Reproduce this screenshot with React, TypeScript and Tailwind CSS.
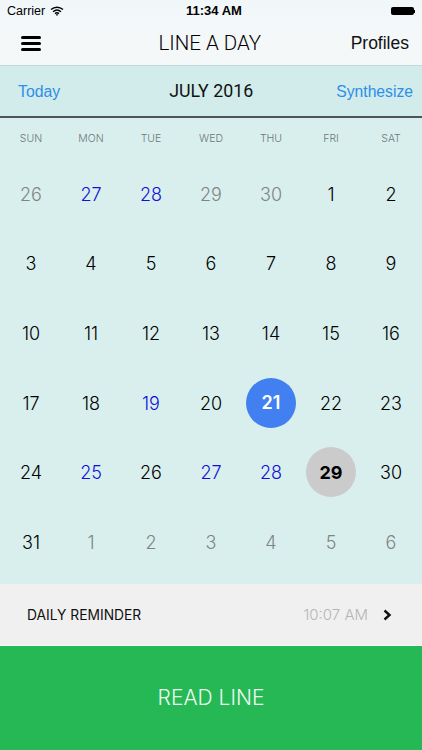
const BLUE = "text-[#1010d8]";
const GREY = "text-[#7f8585]";

const days = [
  ["26", GREY], ["27", BLUE], ["28", BLUE], ["29", GREY], ["30", GREY], ["1", ""], ["2", ""],
  ["3", ""], ["4", ""], ["5", ""], ["6", ""], ["7", ""], ["8", ""], ["9", ""],
  ["10", ""], ["11", ""], ["12", ""], ["13", ""], ["14", ""], ["15", ""], ["16", ""],
  ["17", ""], ["18", ""], ["19", BLUE], ["20", ""], ["21", "today"], ["22", ""], ["23", ""],
  ["24", ""], ["25", BLUE], ["26", ""], ["27", BLUE], ["28", BLUE], ["29", "selected"], ["30", ""],
  ["31", ""], ["1", GREY], ["2", GREY], ["3", GREY], ["4", GREY], ["5", GREY], ["6", GREY],
];

const weekdays = ["SUN", "MON", "TUE", "WED", "THU", "FRI", "SAT"];

const StatusBar = () => (
  <div className="relative flex h-[22px] items-center justify-between pl-[7px] pr-[7px] text-[12.5px] text-black">
    <div className="flex items-center gap-[5px]">
      <span>Carrier</span>
      <svg width="14" height="10" viewBox="0 0 14 10" fill="none" stroke="black" strokeWidth="1.4">
        <path d="M1 3.6C4.5 .4 9.5 .4 13 3.6" />
        <path d="M3 5.7C5.4 3.6 8.6 3.6 11 5.7" />
        <path d="M5 7.6C6.2 6.6 7.8 6.6 9 7.6" />
        <path d="M7 10L5.8 8.5C6.5 8 7.5 8 8.2 8.5Z" fill="black" stroke="none" />
      </svg>
    </div>
    <span className="absolute left-[186px] text-[13px] font-semibold">11:34 AM</span>
    <div className="flex items-center">
      <div className="h-[8px] w-[23px] rounded-[2px] bg-black" />
      <div className="h-[3px] w-[1px] bg-black" />
    </div>
  </div>
);

const NavBar = () => (
  <div className="flex h-[43px] items-center justify-between pl-[21px] pr-[13px] pb-[1px]">
    <div className="flex w-[20px] flex-col gap-[3px]">
      <div className="h-[3px] rounded-full bg-black" />
      <div className="h-[3px] rounded-full bg-black" />
      <div className="h-[3px] rounded-full bg-black" />
    </div>
    <span className="ml-[28px] font-['Roboto',sans-serif] text-[20.5px] font-light text-black">LINE A DAY</span>
    <span className="text-[17.5px] text-[#111]">Profiles</span>
  </div>
);

const Toolbar = () => (
  <div className="flex h-[52px] items-center justify-between border-b-2 border-[#4c5656] bg-[#d2ebeb] pl-[18px] pr-[9px] pt-[1px]">
    <span className="text-[15.8px] text-[#2d8fe8]">Today</span>
    <span className="ml-[26px] font-['Roboto',sans-serif] text-[17.8px] text-[#111]">JULY 2016</span>
    <span className="text-[15.7px] text-[#2d8fe8]">Synthesize</span>
  </div>
);

const Day = ({ label, tone }: { label: string; tone: string }) => {
  if (tone === "today") {
    return (
      <div className="flex h-[50px] w-[50px] items-center justify-center rounded-full bg-[#427ff0] text-[18px] font-semibold text-white">
        {label}
      </div>
    );
  }
  if (tone === "selected") {
    return (
      <div className="flex h-[50px] w-[50px] items-center justify-center rounded-full bg-[#cbcbcb] text-[18px] font-bold text-black">
        {label}
      </div>
    );
  }
  return <span className={`pt-[1px] ${tone || "text-black"}`}>{label}</span>;
};

const Calendar = () => (
  <div className="flex-1 bg-[#d9efed] px-px font-['Inter',sans-serif]">
    <div className="grid h-[41px] grid-cols-7 items-center pt-[1px] text-center text-[10.5px] font-light text-[#6f7878]">
      {weekdays.map((d) => (
        <span key={d}>{d}</span>
      ))}
    </div>
    <div className="grid grid-cols-7 grid-rows-[repeat(6,69.6px)] text-[18px] font-[350]">
      {days.map(([label, tone], i) => (
        <div key={i} className="flex items-center justify-center">
          <Day label={label} tone={tone} />
        </div>
      ))}
    </div>
  </div>
);

export default function App() {
  return (
    <div className="flex h-[750px] w-[422px] flex-col overflow-hidden bg-white font-['Liberation_Sans',sans-serif]">
      <div className="h-[66px] border-b border-[#c4d6d6] bg-gradient-to-b from-[#f1f7f9] to-[#f5f8f9]">
        <StatusBar />
        <NavBar />
      </div>
      <Toolbar />
      <Calendar />
      <div className="flex h-[61px] items-center bg-[#f0f0f0] pl-[27px] pr-[30px] pt-[1px] font-['Inter',sans-serif]">
        <span className="text-[13.8px] text-[#111]">DAILY REMINDER</span>
        <span className="ml-auto text-[15px] font-light text-[#b5b5b5]">10:07 AM</span>
        <svg className="ml-[15px]" width="9" height="12" viewBox="0 0 9 12" fill="none" stroke="#111" strokeWidth="2.4">
          <path d="M1.5 1.5L6.5 6L1.5 10.5" />
        </svg>
      </div>
      <div className="flex h-[105px] items-center justify-center border-t border-[#f7fbf8] bg-[#25b854] pb-[1px] font-['Inter',sans-serif] text-[21px] font-light text-[#e9fbef]">
        READ LINE
      </div>
    </div>
  );
}
